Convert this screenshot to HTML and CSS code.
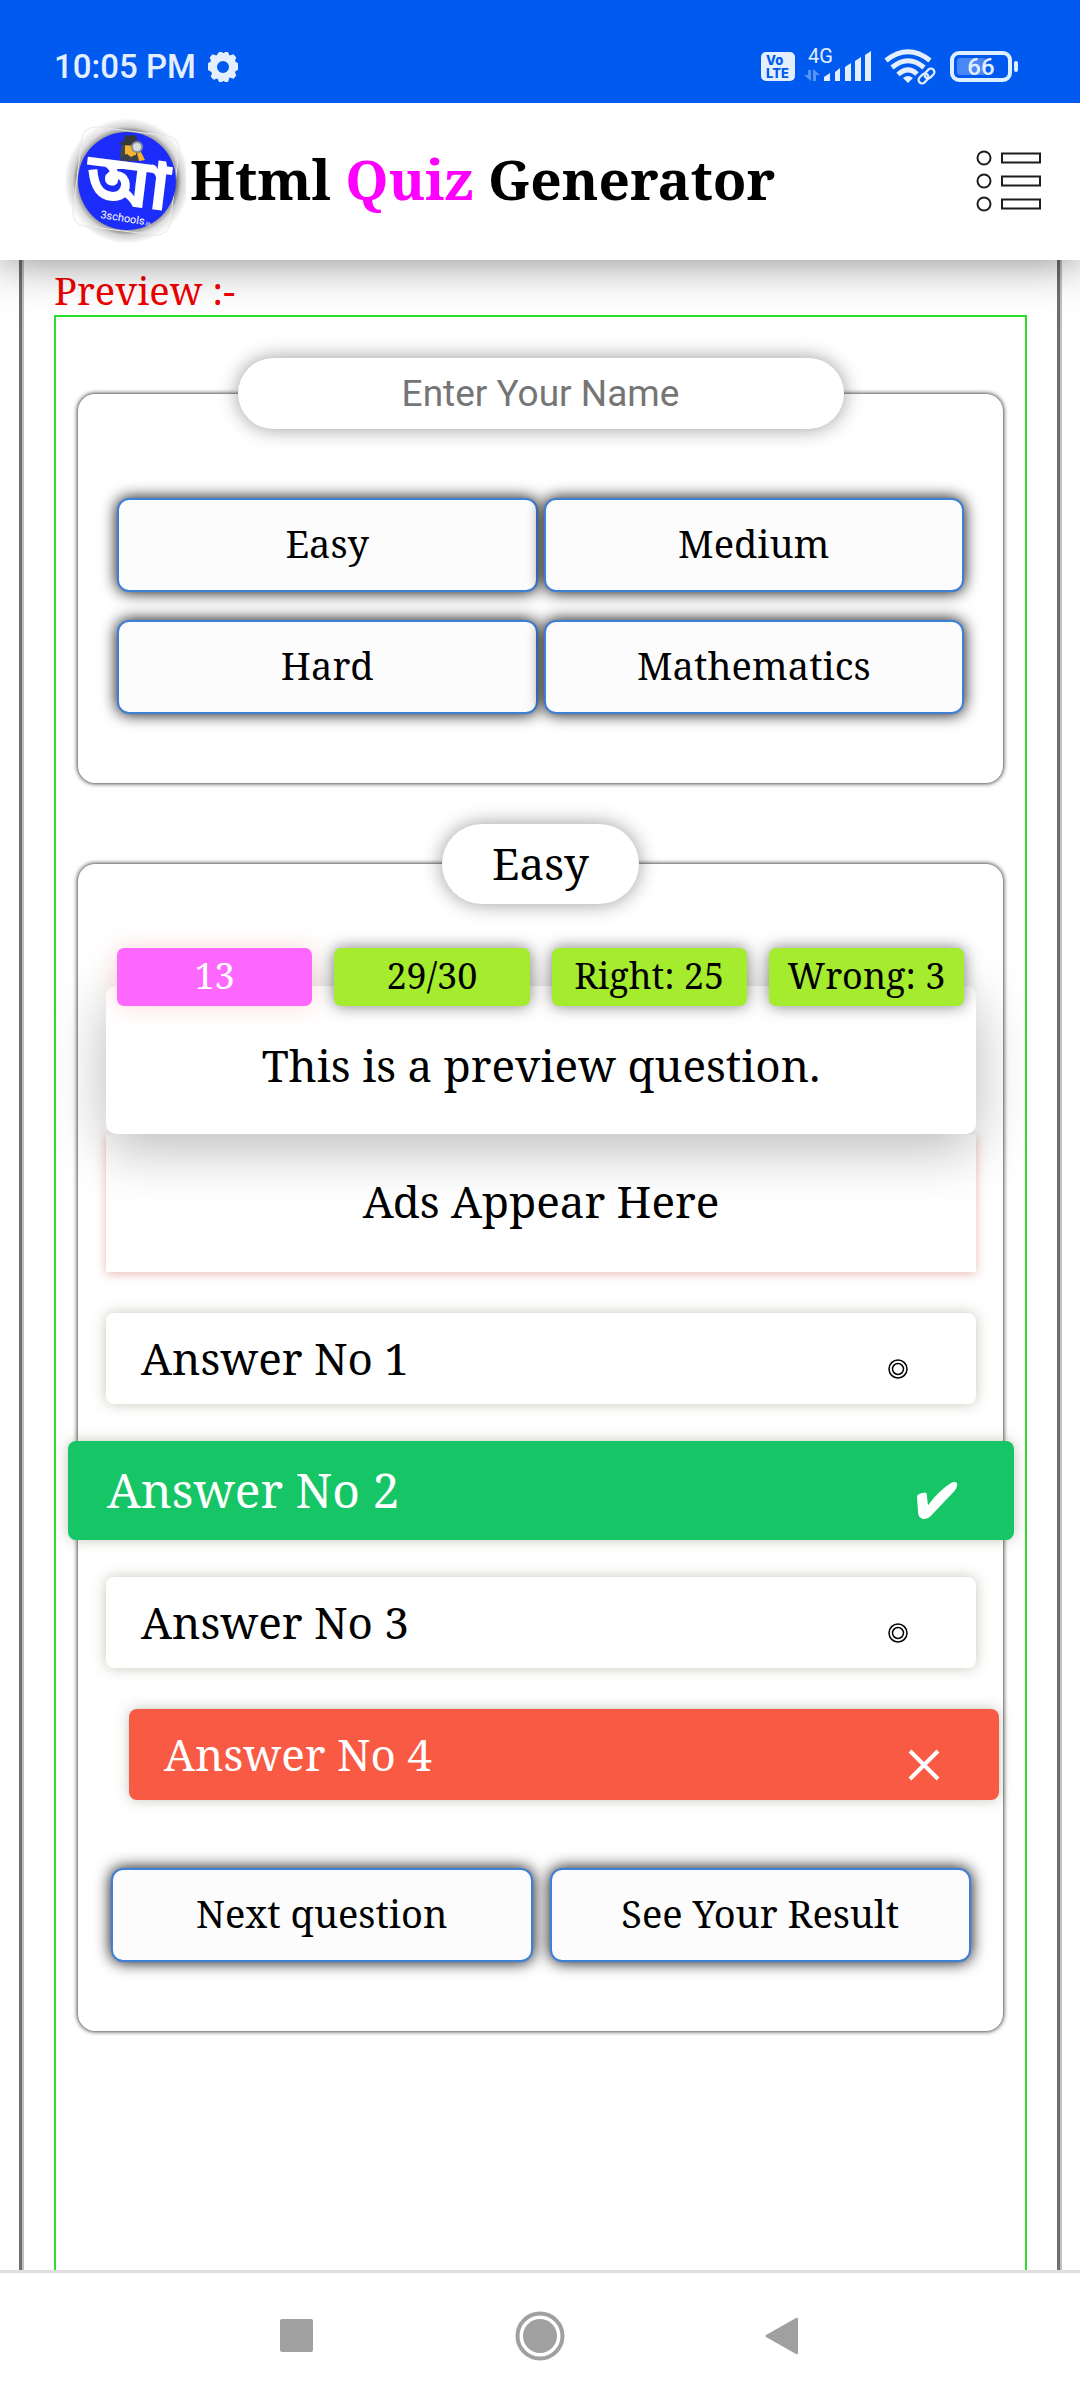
FILE: index.html
```html
<!DOCTYPE html>
<html lang="en">
<head>
<meta charset="utf-8">
<meta name="viewport" content="width=device-width, initial-scale=1">
<title>Html Quiz Generator</title>
<link rel="stylesheet" href="styles.css">
</head>
<body>
<div class="status-bar">
  <div class="status-group">
    <span class="clock">10:05 PM</span>
    <svg class="gear" width="30" height="30" viewBox="0 0 30 30" aria-hidden="true"><path fill="#e3efff" fill-rule="evenodd" d="M11 0h3l1 1h1l1-1h3l1.500 3.500 4-1.200 2.800 3.200-1.200 3 .5 1.500L30 11v7l-2.400 1-.5 1.500 1.200 3-2.800 3.200-4-1.200L20 30h-3l-1-1h-1l-1 1h-3l-1.500-3.500-4 1.200-2.800-3.200 1.200-3-.5-1.500L0 18v-7l2.400-1 .5-1.500-1.200-3L4.500 2.300l4 1.200zM15 9a6 6 0 1 0 0 12 6 6 0 0 0 0-12z"/></svg>
  </div>
  <svg class="status-icons" width="260" height="60" viewBox="0 -10 260 60" role="img" aria-label="Signal, Wi-Fi and battery 66">
    <rect x="2" y="5" width="34" height="29" rx="5" fill="#e3efff"/>
    <text class="volte" x="7" y="18">Vo</text>
    <text class="volte" x="7" y="31">LTE</text>
    <text class="net" x="49" y="16">4G</text>
    <g fill="#5a93f7"><path d="M49 23h3v11l-7-6h4zM54 34h3V28h4l-7-6z"/></g>
    <g fill="#e3efff">
      <path d="M65 34v-4l6-4v8zM76 34v-9l5-4v13zM86 34V20l6-4v18zM96 34V14l6-4v24zM106 34V8l6-4v30z"/>
    </g>
    <g fill="none" stroke="#e3efff" stroke-width="5">
      <path d="M127 13.500Q149 -4 171 13.500"/>
      <path d="M133 20.500Q149 7 165 20.500"/>
      <path d="M139 27.500Q149 18.500 158 27"/>
    </g>
    <path fill="#e3efff" d="M149 36l-5-5q5-4 10 0z"/>
    <g fill="none" stroke="#e3efff" stroke-width="2.200">
      <rect x="159" y="28" width="11" height="7" rx="3.500" transform="rotate(-45 164.500 31.500)"/>
      <rect x="165" y="23" width="11" height="7" rx="3.500" transform="rotate(-45 170.500 26.500)"/>
    </g>
    <rect x="193" y="6" width="58" height="27" rx="7" fill="none" stroke="#dcf0ff" stroke-width="4"/>
    <rect x="198" y="11" width="29" height="17" rx="3" fill="#4a86f5"/>
    <rect x="255" y="14" width="4" height="11" rx="2" fill="#dcf0ff"/>
    <text class="charge" x="222" y="28">66</text>
  </svg>
</div>

<header class="app-header">
  <div class="brand">
    <svg class="logo" width="120" height="136" viewBox="0 0 120 136" role="img" aria-label="3schools">
      <defs><radialGradient id="halo"><stop offset=".76" stop-color="#000" stop-opacity=".65"/><stop offset=".86" stop-color="#000" stop-opacity=".18"/><stop offset="1" stop-color="#000" stop-opacity="0"/></radialGradient></defs>
      <circle cx="61" cy="68" r="63" fill="url(#halo)"/>
      <rect x="11" y="18" width="98" height="100" rx="14" fill="#fff" fill-opacity=".3" stroke="#e8e8e8" transform="rotate(7 60 68)"/>
      <circle cx="61" cy="68" r="49" fill="#1c2cfb"/>
      <g>
        <path fill="#43464b" d="M54 45q0-8 2-14h17q3 8 1 14z"/>
        <path fill="#f7b32b" d="M59 32h11v10q-5 5-11 0z"/>
        <path fill="#35383d" d="M53 31q1-2 5-3 0-6 3-6 4 1 7 0 3 0 3 6 4 1 5 3-11 3-23 0z"/>
        <path fill="#3d4046" d="M55 48q0-7 6-7l4 3 4-2q5 1 5 6z"/>
        <circle cx="71" cy="34" r="5" fill="#d8dde0" stroke="#8c9094" stroke-width="2"/>
        <path fill="#f7b32b" d="M71 40l4-1 4 8-6 1z"/>
      </g>
      <text class="logo-letter" transform="rotate(7 61 68)" x="62" y="93" text-anchor="middle">আ</text>
      <text class="logo-name" transform="rotate(9 34 105)" x="34" y="105">3schools<tspan class="logo-tld">.in</tspan></text>
    </svg>
    <h1 class="title">Html <span class="accent">Quiz</span> Generator</h1>
  </div>
  <button class="menu" type="button" aria-label="Menu">
    <svg width="66" height="64" viewBox="0 0 66 64" fill="none" stroke="#1d1d1d" stroke-width="2"><circle cx="8" cy="9" r="6.500"/><circle cx="8" cy="32" r="6.500"/><circle cx="8" cy="55" r="6.500"/><path d="M26 4.500h38v9H26zM26 27.500h38v9H26zM26 50.500h38v9H26z"/></svg>
  </button>
</header>

<main class="page">
  <h2 class="preview-label">Preview :-</h2>
  <div class="preview">
    <section class="card">
      <input class="name" type="text" placeholder="Enter Your Name" aria-label="Enter Your Name">
      <div class="levels">
        <button class="btn" type="button">Easy</button>
        <button class="btn" type="button">Medium</button>
        <button class="btn" type="button">Hard</button>
        <button class="btn" type="button">Mathematics</button>
      </div>
    </section>

    <section class="card">
      <h3 class="level-name">Easy</h3>
      <div class="stats">
        <span class="stat stat-time">13</span>
        <span class="stat">29/30</span>
        <span class="stat">Right: 25</span>
        <span class="stat">Wrong: 3</span>
      </div>
      <p class="question">This is a preview question.</p>
      <p class="ads">Ads Appear Here</p>
      <div class="answers">
        <button class="answer" type="button">Answer No 1
          <svg class="mark" width="20" height="20" viewBox="0 0 20 20" fill="none" stroke="#000" stroke-width="1.500"><circle cx="10" cy="10" r="9"/><circle cx="10" cy="10" r="5.500"/></svg>
        </button>
        <button class="answer answer-right" type="button">Answer No 2
          <svg class="mark" width="42" height="38" viewBox="0 0 42 36" preserveAspectRatio="none"><path fill="#fff" d="M1 14q0-3 8-4 2 0 2 4l1 8Q23 8 35 1q4-2 6 0 1 4-3 8L15 32q-5 5-10 2-3-1-3-6z"/></svg>
        </button>
        <button class="answer" type="button">Answer No 3
          <svg class="mark" width="20" height="20" viewBox="0 0 20 20" fill="none" stroke="#000" stroke-width="1.500"><circle cx="10" cy="10" r="9"/><circle cx="10" cy="10" r="5.500"/></svg>
        </button>
        <button class="answer answer-wrong" type="button">Answer No 4
          <svg class="mark" width="32" height="32" viewBox="0 0 32 32" fill="none" stroke="#fff" stroke-width="4"><path d="M2 2L30 30M30 2L2 30"/></svg>
        </button>
      </div>
      <div class="actions">
        <button class="btn" type="button">Next question</button>
        <button class="btn" type="button">See Your Result</button>
      </div>
    </section>
  </div>
</main>

<nav class="nav-bar">
  <button class="nav-btn" type="button" aria-label="Recent apps"><svg width="50" height="50" viewBox="0 0 50 50"><rect x="7" y="8" width="33" height="33" rx="2" fill="#a0a0a0"/></svg></button>
  <button class="nav-btn" type="button" aria-label="Home"><svg width="50" height="50" viewBox="0 0 50 50"><circle cx="25" cy="25" r="22.500" fill="none" stroke="#a0a0a0" stroke-width="4"/><circle cx="25" cy="25" r="17" fill="#a0a0a0"/></svg></button>
  <button class="nav-btn" type="button" aria-label="Back"><svg width="50" height="50" viewBox="0 0 50 50"><path d="M9 24L39 7q2-1 2 1v34q0 2-2 1L9 26q-1-1 0-2z" fill="#a0a0a0"/></svg></button>
</nav>
</body>
</html>
```

FILE: styles.css
```css
* {
  box-sizing: border-box;
}

body {
  margin: 0;
  min-height: 100vh;
  display: flex;
  flex-direction: column;
  background: #fff;
  color: #000;
  font-family: "Noto Serif", "DejaVu Serif Condensed", "DejaVu Serif", serif;
}

h1, h2, h3, p {
  margin: 0;
  font-weight: 400;
}

button, input {
  margin: 0;
  padding: 0;
  border: 0;
  color: inherit;
  font-family: inherit;
}

svg {
  display: block;
  flex: none;
}

/* System status bar */
.status-bar {
  position: relative;
  z-index: 2;
  height: 103px;
  padding: 30px 61px 0 54px;
  display: flex;
  align-items: center;
  justify-content: space-between;
  background: #005af0;
  color: #e3efff;
  font-family: Roboto, sans-serif;
}

.status-group {
  display: flex;
  align-items: center;
  gap: 12px;
}

.clock {
  font-size: 33px;
  font-weight: 500;
  line-height: 40px;
}

.volte {
  font: 800 13px Inter, sans-serif;
  fill: #005af0;
}

.net {
  font: 400 20px Roboto, sans-serif;
  fill: #e3efff;
}

.charge {
  font: 500 24px Roboto, sans-serif;
  text-anchor: middle;
  fill: #e3efff;
}

/* App header */
.app-header {
  position: relative;
  z-index: 1;
  height: 157px;
  padding: 0 38px 2px 66px;
  display: flex;
  align-items: center;
  justify-content: space-between;
  background: #fff;
  box-shadow: 0 0 44px rgba(0, 0, 0, .5);
}

.brand {
  display: flex;
  align-items: center;
  gap: 4px;
}

.logo-letter {
  font: 700 70px "Noto Sans Bengali", "Noto Serif Bengali", FreeSans, sans-serif;
  fill: #fff;
}

.logo-name {
  font: 400 11px Roboto, sans-serif;
  fill: #fff;
}

.logo-tld {
  font-size: 6px;
}

.title {
  padding-bottom: 4px;
  font-size: 55px;
  font-weight: 700;
  line-height: 72px;
}

.accent {
  color: #f0f;
}

.menu {
  background: none;
}

/* Page frame */
.page {
  flex: 1;
  display: flex;
  flex-direction: column;
  margin: 0 18px 0 19px;
  padding: 6px 33px 0 32px;
  border-left: 3px solid #6e6e6e;
  border-right: 2px solid #bfbfbf;
  box-shadow: inset 2px 0 #bfbfbf, inset -3px 0 #6e6e6e;
}

.preview-label {
  color: #f00000;
  font-size: 38px;
  line-height: 49px;
}

.preview {
  flex: 1;
  padding: 77px 22px;
  border: 2px solid #2bdf2b;
  border-bottom: 0;
}

.card {
  display: flex;
  flex-direction: column;
  border-radius: 17px;
  background: #fff;
  box-shadow: 0 0 5px #000;
}

.card + .card {
  margin-top: 81px;
}

.name {
  align-self: center;
  width: 606px;
  max-width: 90%;
  height: 71px;
  margin-top: -36px;
  border-radius: 36px;
  background: #fff;
  box-shadow: 0 0 20px rgba(0, 0, 0, .4);
  font-family: Roboto, sans-serif;
  font-size: 37px;
  text-align: center;
}

.name::placeholder {
  color: #757575;
}

.levels, .actions {
  display: grid;
  grid-template-columns: 1fr 1fr;
}

.levels {
  gap: 28px 6px;
  margin: 69px 39px;
}

.btn {
  height: 94px;
  padding-bottom: 4px;
  border: 2px solid #3f7fd5;
  border-radius: 12px;
  background: #fcfcfc;
  box-shadow: 0 0 16px #000;
  font-size: 38px;
}

/* Quiz card */
.level-name {
  align-self: center;
  margin-top: -40px;
  padding: 0 50px 2px;
  border-radius: 40px;
  background: #fff;
  box-shadow: 0 0 20px rgba(0, 0, 0, .4);
  font-size: 44px;
  line-height: 78px;
}

.stats {
  position: relative;
  z-index: 1;
  display: grid;
  grid-template-columns: repeat(4, 1fr);
  gap: 22px;
  margin: 44px 39px 0;
}

.stat {
  padding-bottom: 2px;
  border-radius: 7px;
  background: #a5eb2e;
  box-shadow: 0 0 16px rgba(0, 0, 0, .5);
  font-size: 36px;
  line-height: 56px;
  text-align: center;
  white-space: nowrap;
}

.stat-time {
  background: #ff68ff;
  box-shadow: 0 0 24px rgba(255, 60, 60, .2);
  color: #fff;
}

.question {
  position: relative;
  margin: -20px 27px 0 28px;
  padding: 49px 20px 39px;
  border-radius: 10px;
  background: #fff;
  box-shadow: 0 14px 56px rgba(0, 0, 0, .28);
  font-size: 44px;
  line-height: 60px;
  text-align: center;
}

.ads {
  margin: 0 27px 0 28px;
  padding: 37px 20px 41px;
  background: #fff;
  box-shadow: 0 2px 10px rgba(190, 60, 50, .35);
  font-size: 44px;
  line-height: 60px;
  text-align: center;
}

.answers {
  display: flex;
  flex-direction: column;
  gap: 41px;
  margin: 41px 27px 0 28px;
}

.answer {
  display: flex;
  align-items: center;
  justify-content: space-between;
  height: 91px;
  padding: 0 68px 2px 35px;
  border-radius: 8px;
  background: #fff;
  box-shadow: 0 0 14px rgba(90, 90, 60, .35);
  font-size: 44px;
  text-align: left;
}

.mark {
  margin-top: 22px;
}

.answer-right {
  height: 99px;
  margin: -4px -38px;
  padding: 0 56px 2px 39px;
  background: #15c566;
  color: #fff;
  font-size: 48px;
}

.answer-wrong {
  margin: 0 -23px 0 23px;
  padding: 0 59px 2px 35px;
  background: #f85a44;
  color: #fff;
}

.actions {
  gap: 17px;
  margin: 68px 32px 69px 33px;
}

/* System navigation bar */
.nav-bar {
  height: 130px;
  padding-bottom: 2px;
  display: flex;
  justify-content: center;
  gap: 192px;
  border-top: 3px solid #dedede;
  background: #fff;
}

.nav-btn {
  background: none;
}
```
